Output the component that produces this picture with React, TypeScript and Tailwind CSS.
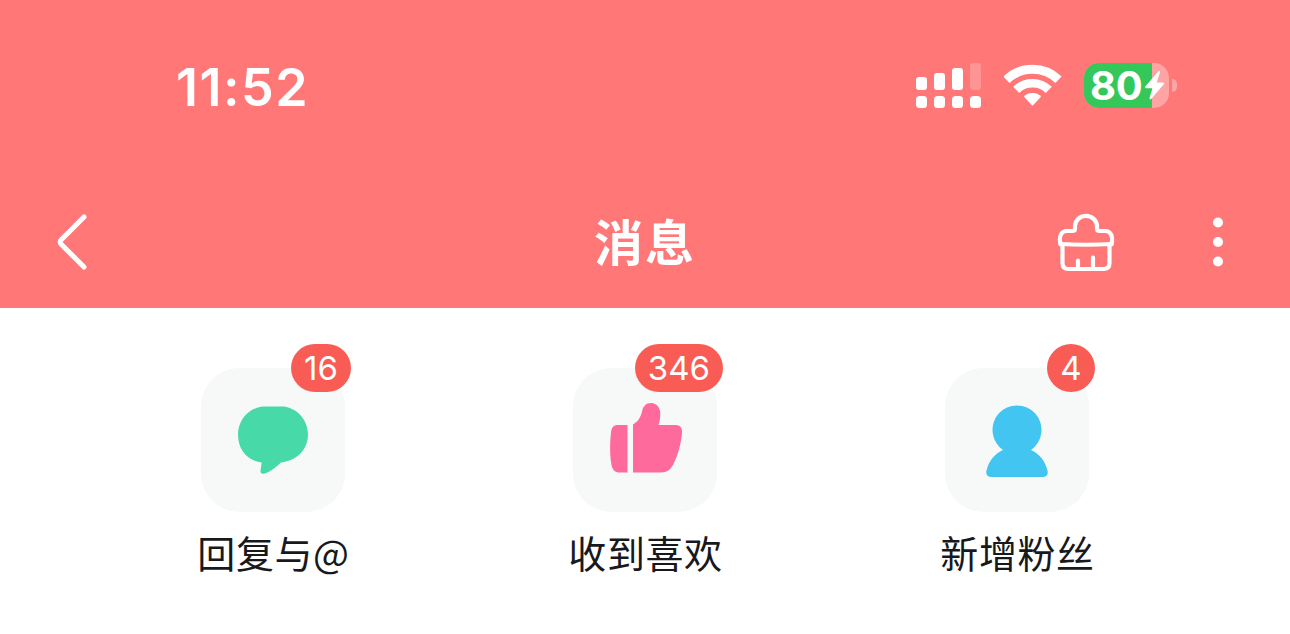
import type { ReactNode } from 'react';

function SignalIcon() {
  return (
    <svg width="66" height="46" viewBox="0 0 66 46" fill="#fff">
      <rect x="0" y="14" width="11" height="13" rx="3" />
      <rect x="18" y="10" width="11" height="17" rx="3" />
      <rect x="36" y="5" width="11" height="22" rx="3" />
      <rect x="54" y="0" width="11" height="27" rx="3" opacity="0.22" />
      <rect x="0" y="33" width="11" height="12" rx="3.5" />
      <rect x="18" y="33" width="11" height="12" rx="3.5" />
      <rect x="36" y="33" width="11" height="12" rx="3.5" />
      <rect x="54" y="33" width="11" height="12" rx="3.5" />
    </svg>
  );
}

function WifiIcon() {
  return (
    <svg className="mt-px" width="58" height="43" viewBox="0 0 58 43" fill="none">
      <path d="M2.500 15.800a37.600 37.600 0 0 1 52 0" stroke="#fff" strokeWidth="9" />
      <path d="M12.200 25.800a23.400 23.400 0 0 1 32.600 0" stroke="#fff" strokeWidth="8.6" />
      <path d="M20.500 33.200q-1-1 .2-1.800a13.500 13.500 0 0 1 15.600 0q1.200.8.2 1.800l-7.200 7.900q-.8.800-1.600 0z" fill="#fff" />
    </svg>
  );
}

function Battery() {
  return (
    <div className="flex items-center gap-[3px]">
      <div className="relative flex h-[45px] w-[85px] items-center rounded-[15px] bg-[#ffa4a4]">
        <div className="absolute inset-y-0 left-0 w-[68px] rounded-l-[15px] bg-[#34c759]" />
        <span className="relative pl-[6px] text-[40px] leading-[45px] font-bold tracking-[-0.3px]">80</span>
        <svg className="absolute top-[7px] left-[60px]" width="21" height="31" viewBox="0 0 21 31" fill="#fff">
          <path d="M14.600 1.200 1.200 16.500q-.9 1.500.7 1.700h6.600L5.500 28q-.2 2.200 1.700 1L19.800 14.200q.8-1.600-.8-1.800h-6.200L16 2.200q0-2-1.400-1z" />
        </svg>
      </div>
      <div className="h-[13px] w-[5px] rounded-r-full bg-[#ffa4a4]" />
    </div>
  );
}

function BrushIcon() {
  return (
    <svg width="58" height="60" viewBox="0 0 58 60" fill="none" stroke="#fff" strokeWidth="4.2" strokeLinecap="round" strokeLinejoin="round">
      <path d="M3.500 32.300c-1.800-8 .5-13.300 6.500-13.300h5.500q2.500 0 2.500-2.500v-2.200a11 10.500 0 0 1 22 0v2.200q0 2.500 2.500 2.500H48c6 0 8.300 5.300 6.500 13.300" />
      <path d="M3.500 32q25.500 1.500 51 0" />
      <path d="M5.500 32v19q0 6 6 6h35q6 0 6-6V32" />
      <path d="M21 48.500v8M36 45.500v11" />
    </svg>
  );
}

function ReplyIcon() {
  return (
    <svg width="72" height="70" viewBox="0 0 72 70" fill="#47d9a8">
      <path d="M25 1.500h22c14 2 24 14 24 28 0 15-11 26-27 28-5 5-11 9.500-17 11.200-2.500.6-3.800-.7-3.500-3l1.200-8.200C10 55.500 1 44.500 1 29.500c0-14 10-26 24-28z" />
    </svg>
  );
}

function LikeIcon() {
  return (
    <svg className="mb-[4px] ml-[2px]" width="74" height="72" viewBox="0 0 74 72" fill="#ff6a9c">
      <path d="M9 23h9.500v47.500H11c-5 0-7.500-2.500-8.500-7.500C.8 53.500.8 41 2 30.500 2.500 25.500 4.500 23 9 23z" />
      <path d="M24 22.500c5-3 7.500-7 9-13C34.200 4 37 1 42 1c6 0 9.500 5 9.300 11-.1 4-.5 7.500-1.800 11h17c5 0 7 3 6.500 8-1 11-4 22-8.500 31-3 5.800-6.500 8.500-12.500 8.500H24z" />
    </svg>
  );
}

function FansIcon() {
  return (
    <svg className="mt-[2px]" width="64" height="74" viewBox="0 0 64 74" fill="#42c5f0">
      <path d="M18 46A24.500 24.500 0 1 1 46 46c8 3.500 14 10.500 16.500 20.500 1 4-1 6.500-5 6.500h-51c-4 0-6-2.500-5-6.500C4 56.500 10 49.500 18 46z" />
    </svg>
  );
}

type EntryProps = {
  label: string;
  count: number;
  icon: ReactNode;
};

function Entry({ label, count, icon }: EntryProps) {
  return (
    <div className="flex flex-col items-center">
      <div className="relative flex size-36 items-center justify-center rounded-[38px] bg-[#f7f9f9]">
        {icon}
        <span className="absolute -top-6 -right-1.5 flex h-12 min-w-12 items-center justify-center rounded-full bg-[#f95c55] px-[13px] text-[33px] leading-none text-white">
          {count}
        </span>
      </div>
      <span className="mt-[13px] pl-px font-['Noto_Sans_CJK_SC',sans-serif] text-[38px] leading-[54px] tracking-[0.6px] whitespace-nowrap text-[#18191c]">
        {label}
      </span>
    </div>
  );
}

const entries: EntryProps[] = [
  { label: '回复与@', count: 16, icon: <ReplyIcon /> },
  { label: '收到喜欢', count: 346, icon: <LikeIcon /> },
  { label: '新增粉丝', count: 4, icon: <FansIcon /> },
];

export default function App() {
  return (
    <div className="h-[634px] w-[1290px] overflow-hidden bg-white font-[Inter,'Noto_Sans_CJK_SC',sans-serif]">
      <header className="h-[308px] bg-[#ff7777] text-white">
        <div className="flex h-[172px] items-start justify-between pt-[63px] pr-[113px] pl-[176px]">
          <span className="text-[52px] leading-[50px] font-semibold tracking-[1.5px]">11:52</span>
          <div className="flex items-start gap-[22px]">
            <SignalIcon />
            <WifiIcon />
            <Battery />
          </div>
        </div>
        <div className="grid h-[136px] grid-cols-[1fr_auto_1fr] items-center pt-1 pr-[67px] pl-[56px]">
          <svg width="34" height="58" viewBox="0 0 34 58" fill="none" stroke="#fff" strokeWidth="5" strokeLinecap="round" strokeLinejoin="round">
            <path d="M28 4 5 27q-1.500 2 0 4l23 23" />
          </svg>
          <h1 className="pt-[3px] pl-[11px] text-[49px] leading-none font-bold tracking-[2px]">消息</h1>
          <div className="flex items-center justify-end gap-[98px]">
            <BrushIcon />
            <svg width="10" height="50" viewBox="0 0 10 50" fill="#fff">
              <circle cx="5" cy="5.500" r="5" />
              <circle cx="5" cy="25" r="5" />
              <circle cx="5" cy="44.500" r="5" />
            </svg>
          </div>
        </div>
      </header>
      <main className="grid grid-cols-3 px-[87px] pt-[60px]">
        {entries.map((entry) => (
          <Entry key={entry.label} {...entry} />
        ))}
      </main>
    </div>
  );
}
